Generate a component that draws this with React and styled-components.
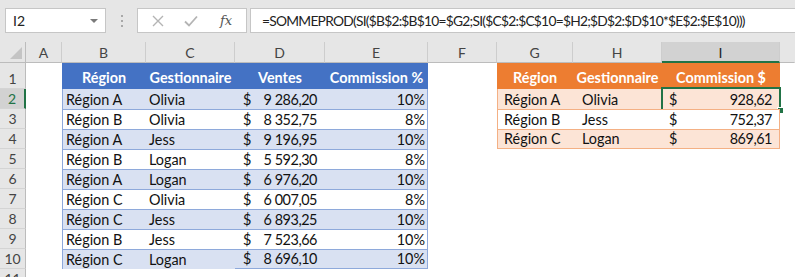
import React from "react";
import styled, { createGlobalStyle } from "styled-components";

const Global = createGlobalStyle`
  html, body { margin: 0; padding: 0; background: #ffffff; }
  body { font-family: Lato, "Liberation Sans", sans-serif; }
`;

const Page = styled.div`
  width: 795px;
  height: 277px;
  overflow: hidden;
  background: #ffffff;
`;

const Toolbar = styled.div`
  height: 42px;
  box-sizing: border-box;
  background: #e6e6e6;
  display: flex;
  align-items: flex-start;
  padding: 8px 0 0 5px;
`;

const NameBox = styled.div`
  width: 101px;
  height: 25px;
  box-sizing: border-box;
  background: #fff;
  border: 1px solid #c6c6c6;
  display: flex;
  align-items: center;
  justify-content: space-between;
  padding: 0 7px 0 7px;
  font-size: 14px;
  color: #222;
`;

const Caret = styled.span`
  width: 0;
  height: 0;
  border-left: 4px solid transparent;
  border-right: 4px solid transparent;
  border-top: 4px solid #7a7a7a;
`;

const Grip = styled.div`
  width: 31px;
  height: 25px;
  display: flex;
  flex-direction: column;
  align-items: center;
  justify-content: center;
  gap: 3px;
`;

const GripDot = styled.span`
  width: 2px;
  height: 2px;
  background: #a8a8a8;
`;

const FnBox = styled.div`
  width: 110px;
  height: 25px;
  box-sizing: border-box;
  background: #fff;
  border: 1px solid #c6c6c6;
  display: flex;
  align-items: center;
  padding-left: 13px;
  gap: 18px;
`;

const FxLabel = styled.span`
  font-family: "DejaVu Serif", "Liberation Serif", serif;
  font-style: italic;
  font-size: 13px;
  color: #555;
  margin-left: 3px;
`;

const FormulaBox = styled.div`
  flex: 1;
  height: 25px;
  margin-left: 3px;
  box-sizing: border-box;
  background: #fff;
  border: 1px solid #c6c6c6;
  border-right: none;
  display: flex;
  align-items: center;
  padding-left: 11px;
  font-size: 13.8px;
  letter-spacing: -0.75px;
  color: #222;
  white-space: nowrap;
  overflow: hidden;
`;

const Sheet = styled.div`
  display: grid;
  grid-template-columns: 26px 36px 84px 89px 90px 103px 69px 76px 89px 118px 1fr;
  grid-template-rows: 21px 26px repeat(10, 20px);
  font-size: 14.4px;
  color: #111;
`;

const Corner = styled.div`
  background: #e6e6e6;
  border-right: 1px solid #bcbcbc;
  border-bottom: 1px solid #bcbcbc;
  box-sizing: border-box;
  position: relative;
  &::after {
    content: "";
    position: absolute;
    right: 3px;
    bottom: 3px;
    border-left: 12px solid transparent;
    border-bottom: 12px solid #c4c4c4;
  }
`;

const ColHead = styled.div`
  box-sizing: border-box;
  background: ${(p) => (p.$active ? "#d2d2d2" : "#e6e6e6")};
  border-right: 1px solid ${(p) => (p.$last ? "transparent" : "#cdcdcd")};
  border-bottom: ${(p) => (p.$active ? "2px solid #217346" : "1px solid #bcbcbc")};
  display: flex;
  align-items: center;
  justify-content: center;
  font-size: 14px;
  color: ${(p) => (p.$active ? "#222" : "#444")};
  padding-top: ${(p) => (p.$active ? "1px" : "0")};
`;

const RowHead = styled.div`
  box-sizing: border-box;
  background: ${(p) => (p.$active ? "#d2d2d2" : "#e6e6e6")};
  border-right: ${(p) => (p.$active ? "2px solid #217346" : "1px solid #bcbcbc")};
  border-bottom: 1px solid #d4d4d4;
  display: flex;
  align-items: flex-end;
  justify-content: center;
  padding-bottom: 1px;
  font-size: 14px;
  color: ${(p) => (p.$active ? "#217346" : "#444")};
`;

const tones = {
  blue: { head: "#4472c4", band: "#d9e1f2", line: "#8ea9db" },
  orange: { head: "#ed7d31", band: "#fce4d6", line: "#f4b084" },
};

const Cell = styled.div`
  box-sizing: border-box;
  position: relative;
  display: flex;
  align-items: flex-end;
  justify-content: ${(p) => p.$justify || "flex-start"};
  padding: 0 ${(p) => p.$pr ?? 3}px 1px ${(p) => p.$pl ?? 3}px;
  white-space: nowrap;
  background: ${(p) => (p.$tone ? (p.$head ? tones[p.$tone].head : p.$band ? tones[p.$tone].band : "#fff") : "#fff")};
  color: ${(p) => (p.$head ? "#fff" : "#111")};
  font-weight: ${(p) => (p.$head ? 700 : 400)};
  border-top: ${(p) => (p.$top ? `1px solid ${tones[p.$tone].line}` : "none")};
  border-left: ${(p) => (p.$left ? `1px solid ${tones[p.$tone].line}` : "none")};
  border-right: ${(p) => (p.$right ? `1px solid ${tones[p.$tone].line}` : "none")};
  border-bottom: ${(p) => (p.$bottom ? `1px solid ${tones[p.$tone].line}` : "none")};
  ${(p) => (p.$head ? "padding-bottom: 3px;" : "")}
`;

const Amount = styled.span`
  letter-spacing: -0.45px;
`;

const Selection = styled.div`
  position: absolute;
  left: -1px;
  top: -2px;
  right: -2px;
  bottom: -2px;
  border: 2px solid #217346;
  pointer-events: none;
  &::after {
    content: "";
    position: absolute;
    right: -5px;
    bottom: -5px;
    width: 5px;
    height: 5px;
    background: #217346;
    border: 1px solid #fff;
  }
`;

const cols = ["A", "B", "C", "D", "E", "F", "G", "H", "I", "J"];

const blueRows = [
  ["Région A", "Olivia", "9 286,20", "10%"],
  ["Région B", "Olivia", "8 352,75", "8%"],
  ["Région A", "Jess", "9 196,95", "10%"],
  ["Région B", "Logan", "5 592,30", "8%"],
  ["Région A", "Logan", "6 976,20", "10%"],
  ["Région C", "Olivia", "6 007,05", "8%"],
  ["Région C", "Jess", "6 893,25", "10%"],
  ["Région B", "Jess", "7 523,66", "10%"],
  ["Région C", "Logan", "8 696,10", "10%"],
];

const orangeRows = [
  ["Région A", "Olivia", "928,62"],
  ["Région B", "Jess", "752,37"],
  ["Région C", "Logan", "869,61"],
];

const Blank = styled.div`
  background: #fff;
`;

function CrossIcon() {
  return (
    <svg width="14" height="14" viewBox="0 0 14 14">
      <path d="M2 2 L12 12 M12 2 L2 12" stroke="#b4b4b4" strokeWidth="1.4" fill="none" />
    </svg>
  );
}

function CheckIcon() {
  return (
    <svg width="16" height="14" viewBox="0 0 16 14">
      <path d="M2 7.5 L6 11.5 L14 2.5" stroke="#b4b4b4" strokeWidth="1.8" fill="none" />
    </svg>
  );
}

export default function App() {
  const rows = [];
  rows.push(<Corner key="corner" />);
  cols.forEach((c, i) => {
    rows.push(
      <ColHead key={"ch" + c} $active={c === "I"} $last={i === cols.length - 1}>
        {c === "J" ? "" : c}
      </ColHead>
    );
  });

  for (let r = 1; r <= 11; r++) {
    rows.push(
      <RowHead key={"rh" + r} $active={r === 2}>
        {r}
      </RowHead>
    );
    rows.push(<Blank key={"a" + r} />);
    if (r === 1) {
      ["Région", "Gestionnaire", "Ventes", "Commission %"].forEach((t, i) =>
        rows.push(
          <Cell key={"bh" + i} $tone="blue" $head $justify="center">
            {t}
          </Cell>
        )
      );
    } else if (r <= 10) {
      const d = blueRows[r - 2];
      const band = r % 2 === 0;
      const top = r > 2;
      const last = r === 10;
      rows.push(
        <Cell key={"b" + r} $tone="blue" $band={band} $top={top} $left>
          {d[0]}
        </Cell>
      );
      rows.push(
        <Cell key={"c" + r} $tone="blue" $band={band} $top={top}>
          {d[1]}
        </Cell>
      );
      rows.push(
        <Cell key={"d" + r} $tone="blue" $band={band} $top={top} $bottom={last} $justify="space-between" $pl={8} $pr={8}>
          <span>$</span>
          <Amount>{d[2]}</Amount>
        </Cell>
      );
      rows.push(
        <Cell key={"e" + r} $tone="blue" $band={band} $top={top} $bottom={last} $right $justify="flex-end" $pr={2}>
          {d[3]}
        </Cell>
      );
    } else {
      ["b", "c", "d", "e"].forEach((k) => rows.push(<Blank key={k + r} />));
    }
    rows.push(<Blank key={"f" + r} />);
    if (r === 1) {
      ["Région", "Gestionnaire", "Commission $"].forEach((t, i) =>
        rows.push(
          <Cell key={"oh" + i} $tone="orange" $head $justify="center">
            {t}
          </Cell>
        )
      );
    } else if (r <= 4) {
      const d = orangeRows[r - 2];
      const band = r % 2 === 0;
      const top = r > 2;
      const last = r === 4;
      rows.push(
        <Cell key={"g" + r} $tone="orange" $band={band} $top={top} $left $bottom={last} $pl={6}>
          {d[0]}
        </Cell>
      );
      rows.push(
        <Cell key={"h" + r} $tone="orange" $band={band} $top={top} $bottom={last} $pl={9}>
          {d[1]}
        </Cell>
      );
      rows.push(
        <Cell key={"i" + r} $tone="orange" $band={band} $top={top} $bottom={last} $right $justify="space-between" $pl={7} $pr={7}>
          <span>$</span>
          <Amount>{d[2]}</Amount>
          {r === 2 && <Selection />}
        </Cell>
      );
    } else {
      ["g", "h", "i"].forEach((k) => rows.push(<Blank key={k + r} />));
    }
    rows.push(<Blank key={"j" + r} />);
  }

  return (
    <Page>
      <Global />
      <Toolbar>
        <NameBox>
          <span>I2</span>
          <Caret />
        </NameBox>
        <Grip>
          <GripDot />
          <GripDot />
          <GripDot />
        </Grip>
        <FnBox>
          <CrossIcon />
          <CheckIcon />
          <FxLabel>fx</FxLabel>
        </FnBox>
        <FormulaBox>=SOMMEPROD(SI($B$2:$B$10=$G2;SI($C$2:$C$10=$H2;$D$2:$D$10*$E$2:$E$10)))</FormulaBox>
      </Toolbar>
      <Sheet>{rows}</Sheet>
    </Page>
  );
}
